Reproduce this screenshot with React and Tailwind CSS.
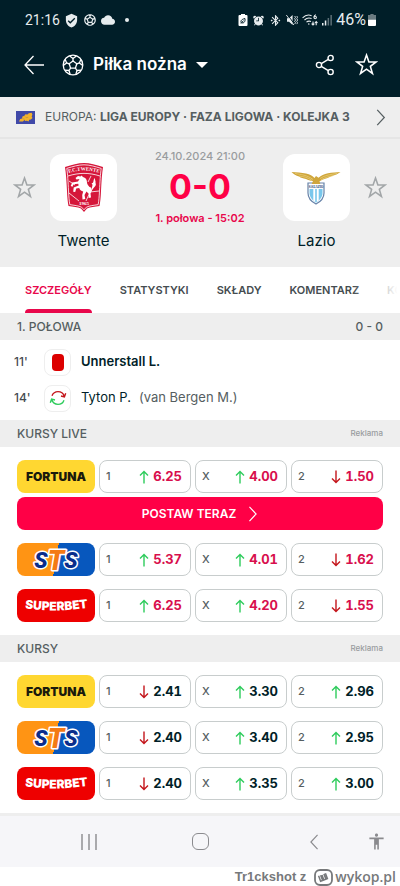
import React, { useState } from "react";
import { IoAlarm } from "react-icons/io5";
import {
  MdAccessibility,
  MdBluetoothConnected,
  MdCloud,
  MdSportsSoccer,
  MdVerifiedUser,
} from "react-icons/md";

const TABS = ["SZCZEGÓŁY", "STATYSTYKI", "SKŁADY", "KOMENTARZ", "KO"];

const LIVE_ODDS = [
  { bookmaker: "fortuna", odds: [["1", "up", "6.25"], ["X", "up", "4.00"], ["2", "down", "1.50"]] },
  { bookmaker: "sts", odds: [["1", "up", "5.37"], ["X", "up", "4.01"], ["2", "down", "1.62"]] },
  { bookmaker: "superbet", odds: [["1", "up", "6.25"], ["X", "up", "4.20"], ["2", "down", "1.55"]] },
];

const PREMATCH_ODDS = [
  { bookmaker: "fortuna", odds: [["1", "down", "2.41"], ["X", "up", "3.30"], ["2", "up", "2.96"]] },
  { bookmaker: "sts", odds: [["1", "down", "2.40"], ["X", "up", "3.40"], ["2", "up", "2.95"]] },
  { bookmaker: "superbet", odds: [["1", "down", "2.40"], ["X", "up", "3.35"], ["2", "up", "3.00"]] },
];

/* ---------- icons ---------- */

function StarIcon({ className }) {
  return (
    <svg className={className} viewBox="0 0 22 22" fill="none" stroke="currentColor" strokeLinejoin="miter">
      <path d="M11 2l2.300 6.600h6.900l-5.500 4.200 2 6.800L11 15.500l-5.700 4.100 2-6.800-5.500-4.200h6.900z" />
    </svg>
  );
}

function BallIcon() {
  return (
    <svg className="size-[22px]" viewBox="0 0 22 22" fill="none" stroke="#fff" strokeWidth="1.3" strokeLinejoin="round">
      <circle cx="11" cy="11" r="9.8" />
      <path d="M11 7l3.8 2.8-1.4 4.4H8.6L7.2 9.8z" />
      <path d="M11 7V4.400M14.800 9.800l2.600-.9M13.400 14.200l1.600 2.300M8.600 14.200L7 16.500M7.200 9.800l-2.600-.9" />
      <path d="M7.600 1.900L11 4.400l3.400-2.500M18.900 5.300l-1.500 3.600 3.300 2.600M19.200 16.200l-4.200.3-1.100 3.800M8.100 20.300L7 16.500l-4.200-.3M1.300 11.500l3.300-2.600-1.500-3.600" />
    </svg>
  );
}

function ShareIcon() {
  return (
    <svg className="h-[22px] w-5" viewBox="0 0 20 22" fill="none" stroke="#fff" strokeWidth="1.4">
      <circle cx="4" cy="11" r="2.6" />
      <circle cx="15.6" cy="4" r="2.6" />
      <circle cx="15.6" cy="18" r="2.6" />
      <path d="M6.300 9.600l7-4.200M6.300 12.400l7 4.200" />
    </svg>
  );
}

function Chevron({ className, left }) {
  return (
    <svg className={className} viewBox="0 0 10 18" fill="none" stroke="currentColor" strokeWidth="1.3">
      <path d={left ? "M9 1L1.500 9 9 17" : "M1 1l7.500 8L1 17"} />
    </svg>
  );
}

function TrendArrow({ dir }) {
  return dir === "up" ? (
    <svg className="h-3.5 w-2.5" viewBox="0 0 10 14" fill="none" stroke="#2ecc5c" strokeWidth="1.4">
      <path d="M5 13.500V1.500M1 5.500l4-4 4 4" />
    </svg>
  ) : (
    <svg className="h-3.5 w-2.5" viewBox="0 0 10 14" fill="none" stroke="#c4161c" strokeWidth="1.4">
      <path d="M5 .5v12M1 8.500l4 4 4-4" />
    </svg>
  );
}

function SubstitutionIcon() {
  return (
    <svg className="size-[18px]" viewBox="0 0 18 18" fill="none" strokeWidth="1.4">
      <path d="M3 6.800C4 4.200 6.400 2.600 9 2.600c3 0 5.300 1.700 6.200 4.600M12 7l3.400.9 1.300-3.600" stroke="#c4161c" />
      <path d="M15 11.200c-1 2.600-3.400 4.200-6 4.200-3 0-5.300-1.700-6.200-4.600M6 11l-3.400-.9-1.300 3.600" stroke="#2ecc5c" />
    </svg>
  );
}

function MuteIcon() {
  return (
    <svg className="h-3 w-3" viewBox="0 0 12 12" fill="currentColor">
      <path d="M1 4.200h2L6.600 1v10L3 7.800H1z" />
      <path d="M1.500.8l7 9.400" stroke="#001e28" strokeWidth="1" />
      <path d="M.3 1l7.600 10M8.600 2l1 1.300-1 1.400 1 1.300-1 1.400 1 1.300-1 1.400M10.700 2l1 1.300-1 1.400 1 1.300-1 1.400 1 1.300-1 1.400" fill="none" stroke="currentColor" strokeWidth=".9" />
    </svg>
  );
}

function WifiIcon() {
  return (
    <svg className="h-3 w-4" viewBox="0 0 16 12" fill="none" stroke="currentColor" strokeWidth="1.1">
      <path d="M.6 3.800C3.200 1.200 6.600.5 9.600 1.700M2.500 6C4.500 4 7 3.500 9.600 4.500M4.500 8.200C5.800 7 7.500 6.900 9 7.500" />
      <circle cx="6.8" cy="10" r=".8" fill="currentColor" stroke="none" />
      <path d="M14 .8c-1.600.2-2 1.400-2 2.500M11 11V7.500M9.600 9.600L11 11l1.400-1.400M14.200 11.300V7.600M12.900 9l1.300-1.400L15.500 9" />
      <circle cx="13.2" cy="3.500" r="1.2" />
    </svg>
  );
}

function SignalIcon() {
  return (
    <svg className="h-3 w-2.5" viewBox="0 0 10 12" fill="currentColor">
      <rect x="0" y="9" width="1.5" height="2.5" />
      <rect x="2.8" y="6.5" width="1.5" height="5" />
      <rect x="5.6" y="4" width="1.5" height="7.5" opacity=".4" />
      <rect x="8.4" y="1" width="1.5" height="10.5" opacity=".4" />
    </svg>
  );
}

function BatteryIcon() {
  return (
    <svg className="h-3 w-2" viewBox="0 0 8 12">
      <path d="M2.400 0h3.200v1H8v5H0V1h2.400z" fill="#6b7b81" />
      <path d="M0 5.800h8V11a1 1 0 0 1-1 1H1a1 1 0 0 1-1-1z" fill="#fff" />
    </svg>
  );
}

function SaverIcon() {
  return (
    <svg className="h-3 w-2.5" viewBox="0 0 10 12">
      <path d="M3 0h4v1h1.500a1 1 0 0 1 1 1v9a1 1 0 0 1-1 1h-7a1 1 0 0 1-1-1V2a1 1 0 0 1 1-1H3z" fill="#fff" />
      <path d="M3.400 9c-1-1.600-.4-3.800 3.600-4.400.4 3-1 4.800-3 4.200M3 9.600l2.400-3" fill="none" stroke="#001e28" />
    </svg>
  );
}

function EuropeFlag() {
  return (
    <svg className="h-[13px] w-[19px]" viewBox="0 0 19 13">
      <rect width="19" height="13" fill="#4049a8" />
      <path d="M3 10.500l1.200-2.600 1.900-.3.300-2 2-.8 1-1.600 2 .4 1.400-1.400 2.800-.4.800 1.600-.7 2 .8 1.700-1.600 1.400-1.700.2-.6 1.700-1.700-.7-1.600.3-.9-.9-1.500 1.500z" fill="#f2b22c" />
      <path d="M6.500 7.600l2.300.7M9 5.500l1.200 1.200 2-.4" stroke="#b08a4a" strokeWidth=".6" fill="none" />
    </svg>
  );
}

/* ---------- club crests ---------- */

function TwenteCrest() {
  return (
    <svg className="h-[51px] w-10" viewBox="0 0 40 51">
      <path d="M1 5C8 3 14 1 20 1s12 2 19 4c-1 6-1.500 14-2 24-.3 7-.8 11-1.500 15-5 1-9 1-12.500 2.500L20 50l-3-3.500C13.500 45 9.500 45 4.500 44 3.800 40 3.300 36 3 29 2.500 19 2 11 1 5z" fill="#d5163a" />
      <path d="M2.800 6.400C9 4.500 14.500 2.800 20 2.800s11 1.700 17.200 3.600c-.8 6-1.300 13-1.700 22.600-.3 6-.7 10-1.300 13.600-4.500.8-8.500 1-11.800 2.600L20 47.800l-2.400-2.600c-3.300-1.600-7.300-1.800-11.800-2.600C5.200 39 4.800 35 4.500 29 4.100 19.400 3.600 12.400 2.800 6.400z" fill="none" stroke="#fff" strokeWidth=".8" />
      <path d="M4 14c11-3.500 21-3.500 32 0M5 19l6 4M5 31l10 8M35 29l-9 1-4 9M27 14l-3 6" fill="none" stroke="#fff" strokeWidth=".8" />
      <path id="twente-arc" d="M2.500 11.800c11-4.400 24-4.400 35 0" fill="none" />
      <text fontFamily="Liberation Serif, serif" fontWeight="700" fontSize="5" fill="#fff" textAnchor="middle">
        <textPath href="#twente-arc" startOffset="50%">F.C.TWENTE</textPath>
      </text>
      <path d="M14 14l2.500.5 1-1 1.500 1.500c2.500.6 4 2.500 4 5.500 0 2 1.500 3 2.500 4.500 1.500.2 2.500 1.500 2.500 3.500l-1.500 3 .5 4-2.500.5.5-4-2.500-2.500-2 3.500.8 4-2.800.5-.3-4.500 1-3.500c-2-.4-3.500-1.700-4-3.500l-3 .5-1 3.500-2-.3.500-4.200 5-2-.5-1.800-4.700.6-1 2.500-1.800-.8 1.500-3.500 5.800-1 1.500-2.500-3 .5-1-1.500z" fill="#fff" />
      <path d="M28.500 28c-2-3 1.500-4-1-7 3 .5 1-3 3.500-5-.5 2 1 3 .5 5 1.500 3-2 4-3 7z" fill="#fff" />
      <text x="20" y="43" fontFamily="Liberation Serif, serif" fontWeight="700" fontSize="5" fill="#fff" textAnchor="middle">1965</text>
    </svg>
  );
}

function LazioCrest() {
  return (
    <svg className="h-[34px] w-[50px]" viewBox="0 0 50 34">
      <path d="M17 12h16v10c0 5-3 8.500-8 11-5-2.500-8-6-8-11z" fill="#fff" stroke="#6682a8" strokeWidth="1.200" />
      <path d="M18.500 18h13v4c0 4-2.500 7-6.500 9.500-4-2.500-6.500-5.500-6.500-9.500z" fill="#79c7ec" />
      <path d="M22.300 18h5.400v11.500L25 31.500l-2.700-2z" fill="#fff" />
      <path d="M24.200 18h1.600v13l-.8.500-.8-.5z" fill="#79c7ec" />
      <path d="M18 14h14v3.200H18z" fill="#e6edf5" />
      <text x="25" y="17" fontFamily="Liberation Serif, serif" fontWeight="700" fontSize="3" fill="#27416e" textAnchor="middle">S.S.LAZIO</text>
      <path d="M.5 1c5 .6 10 .4 14.500 1.600 4 1 6.500 2.200 8.500 4.400L25 5l2.500 1.800C30 4.400 33 3 37 2.200 41 1.400 45 1.600 49.500 1c-2.500 2-5.500 3.200-8.500 4-3 1.600-6 2.600-9 3.500l-3.500 1.800.8 2.700h-8.600l1.300-3c-3-.3-5-1-7-2-3-.4-5-1.200-7-2.500C5 4.600 2.500 3.200.5 1z" fill="#cfa63c" />
      <path d="M4 2.500c6 1 12 1.500 18 6M46 2.500c-6 1-12 1.500-17 5M8 5c5 .6 9 1.500 13 4.500M42 4.800c-4 .4-8 1.800-12 4" fill="none" stroke="#f0d888" strokeWidth=".6" />
    </svg>
  );
}

/* ---------- bookmakers ---------- */

function BookmakerLogo({ name }) {
  if (name === "fortuna") {
    return (
      <a href="#fortuna" className="flex h-[33px] items-center justify-center rounded-lg bg-[#ffd731] text-xs font-black text-[#1a1a0c]">
        FORTUNA
      </a>
    );
  }
  if (name === "sts") {
    return (
      <a href="#sts" aria-label="STS" className="flex h-[33px] items-center justify-center rounded-lg bg-linear-100 from-[#ff9414] from-50% to-[#0757bd] to-50%">
        <svg className="h-[33px] w-14" viewBox="0 0 56 33" overflow="visible">
          <text x="28" y="25" fontFamily="Roboto, sans-serif" fontWeight="900" fontStyle="italic" fontSize="22" fill="#0a2d8c" stroke="#fff" strokeWidth="3" strokeLinejoin="round" paintOrder="stroke" textAnchor="middle">
            S<tspan fontSize="27" dy="2" fill="#f47a14">T</tspan><tspan dy="-2">S</tspan>
          </text>
        </svg>
      </a>
    );
  }
  return (
    <a href="#superbet" aria-label="Superbet" className="block h-[33px] rounded-lg bg-[#ee0000]">
      <svg className="h-full w-full" viewBox="0 0 78 33">
        <path id="superbet-wave" d="M5 19.500C16 20 24 21.500 38 21.500S62 19.500 74 18.500" fill="none" />
        <text fontFamily="Inter, sans-serif" fontWeight="900" fontSize="12" fill="#fff" textAnchor="middle">
          <textPath href="#superbet-wave" startOffset="50%">SUPERBET</textPath>
        </text>
      </svg>
    </a>
  );
}

function OddsRow({ row, live }) {
  return (
    <div className="grid grid-cols-[78px_1fr_1fr_1fr] gap-1">
      <BookmakerLogo name={row.bookmaker} />
      {row.odds.map(([label, dir, value]) => (
        <button key={label} className="flex h-[33px] items-center justify-between rounded-lg border border-[#c8cdcd] pr-2 pl-1.5 text-[#555e61]">
          <span className="text-[11px] font-medium">{label}</span>
          <span className="flex items-center gap-1">
            <TrendArrow dir={dir} />
            <span className={live ? "text-[13px] font-bold text-[#d80f4d] tabular-nums" : "text-[13px] font-bold text-[#001e28] tabular-nums"}>
              {value}
            </span>
          </span>
        </button>
      ))}
    </div>
  );
}

function SectionBar({ title, children }) {
  return (
    <div className="flex h-[27px] items-center justify-between bg-[#eeeeee] px-[17px] text-xs font-medium text-[#555e61]">
      <h2>{title}</h2>
      {children}
    </div>
  );
}

function Team({ name, children }) {
  return (
    <div className="flex flex-col items-center gap-2.5">
      <div className="flex size-[67px] items-center justify-center rounded-xl bg-white">{children}</div>
      <span className="text-[15px] leading-5 text-[#001e28]">{name}</span>
    </div>
  );
}

function App() {
  const [tab, setTab] = useState("SZCZEGÓŁY");

  return (
    <div className="w-full bg-white font-[Inter,sans-serif]">
      <header className="bg-[#001e28] text-white">
        {/* Status bar */}
        <div className="flex h-10 items-center justify-between pr-6 pl-[25px] font-[Roboto,sans-serif] text-[15px] text-[#e6ecee]">
          <div className="flex items-center gap-1">
            <span className="text-sm">21:16</span>
            <MdVerifiedUser size={15} />
            <MdSportsSoccer size={14} />
            <MdCloud size={14} />
            <span className="ml-1.5 size-1 rounded-full bg-[#e6ecee]" />
          </div>
          <div className="flex items-center gap-1">
            <SaverIcon />
            <IoAlarm size={13} />
            <MdBluetoothConnected size={13} />
            <MuteIcon />
            <WifiIcon />
            <SignalIcon />
            <span className="flex items-center gap-0.5 text-base">
              46%
              <BatteryIcon />
            </span>
          </div>
        </div>

        {/* Nav bar */}
        <div className="flex h-[57px] items-center pr-[22px] pb-2 pl-6">
          <button aria-label="Wstecz">
            <svg className="h-5 w-5" viewBox="0 0 20 20" fill="none" stroke="#fff" strokeWidth="1.300">
              <path d="M20 10H1M9.500 1L1 10l8.500 9" />
            </svg>
          </button>
          <button className="ml-[18px] flex items-center gap-[9px] text-[17px] font-semibold">
            <BallIcon />
            Piłka nożna
            <svg className="h-1.5 w-3" viewBox="0 0 12 6" fill="#fff">
              <path d="M0 0h12L6 6z" />
            </svg>
          </button>
          <div className="ml-auto flex items-center gap-5">
            <button aria-label="Udostępnij">
              <ShareIcon />
            </button>
            <button aria-label="Ulubione">
              <StarIcon className="size-[23px] stroke-[1.5]" />
            </button>
          </div>
        </div>
      </header>

      {/* League */}
      <a href="#liga" className="flex h-[42px] items-center border-b-2 border-[#e5e5e5] bg-[#eeeeee] pr-3.5 pl-4 text-xs text-[#555e61]">
        <EuropeFlag />
        <span className="ml-2.5 whitespace-nowrap">
          EUROPA: <b className="font-bold">LIGA EUROPY · FAZA LIGOWA · KOLEJKA 3</b>
        </span>
        <Chevron className="ml-auto h-[17px] w-2.5" />
      </a>

      {/* Match */}
      <div className="flex justify-between bg-[#eeeeee] px-[13px] pt-[15px] pb-4">
        <div className="flex gap-3.5">
          <button aria-label="Obserwuj Twente" className="flex h-[67px] items-center text-[#a2a6a8]">
            <StarIcon className="size-[23px] stroke-[1.5]" />
          </button>
          <Team name="Twente">
            <TwenteCrest />
          </Team>
        </div>
        <div className="-mt-1.5 flex flex-col items-center gap-[3px] whitespace-nowrap">
          <span className="text-[11px] leading-4 font-medium text-[#999c9e]">24.10.2024 21:00</span>
          <span className="text-[34px] leading-10 font-bold text-[#ff0046]">0-0</span>
          <span className="text-[11px] leading-4 font-semibold text-[#e8074b]">1. połowa - 15:02</span>
        </div>
        <div className="flex gap-3.5">
          <Team name="Lazio">
            <LazioCrest />
          </Team>
          <button aria-label="Obserwuj Lazio" className="flex h-[67px] items-center text-[#a2a6a8]">
            <StarIcon className="size-[23px] stroke-[1.5]" />
          </button>
        </div>
      </div>

      {/* Tabs */}
      <div className="relative">
        <div role="tablist" className="flex h-[46px] gap-7 overflow-hidden pl-[25px]">
          {TABS.map((t) => (
            <button
              key={t}
              role="tab"
              aria-selected={t === tab}
              onClick={() => setTab(t)}
              className={
                t === tab
                  ? "flex shrink-0 flex-col justify-between pt-[15px] text-[11px] leading-4 font-semibold text-[#e8074b]"
                  : "flex shrink-0 flex-col justify-between pt-[15px] text-[11px] leading-4 font-semibold text-[#454c50]"
              }
            >
              {t}
              {t === tab && <span className="h-1 w-full rounded-t bg-[#e8074b]" />}
            </button>
          ))}
        </div>
        <div className="pointer-events-none absolute inset-y-0 right-0 w-12 bg-linear-to-r from-white/0 to-white to-95%" />
      </div>

      <SectionBar title="1. POŁOWA">
        <span>0 - 0</span>
      </SectionBar>

      {/* Events */}
      <ul className="py-1 text-[13px] text-[#001e28]">
        <li className="flex h-9 items-center pl-3.5">
          <span className="w-[30px] text-xs font-medium text-[#454c50]">11'</span>
          <span className="flex size-[27px] items-center justify-center rounded-lg border border-[#eeeeee]">
            <span className="h-[17px] w-3 rounded-sm bg-[#dc0000]" />
          </span>
          <span className="ml-2.5 font-semibold">Unnerstall L.</span>
        </li>
        <li className="flex h-9 items-center pl-3.5">
          <span className="w-[30px] text-xs font-medium text-[#454c50]">14'</span>
          <span className="flex size-[27px] items-center justify-center rounded-lg border border-[#eeeeee]">
            <SubstitutionIcon />
          </span>
          <span className="ml-2.5">Tyton P.</span>
          <span className="ml-2 text-[#555e61]">(van Bergen M.)</span>
        </li>
      </ul>

      <SectionBar title="KURSY LIVE">
        <span className="text-[8px] text-[#999c9e]">Reklama</span>
      </SectionBar>
      <div className="flex flex-col gap-[13px] px-[17px] py-[13px]">
        <div className="flex flex-col gap-1">
          <OddsRow row={LIVE_ODDS[0]} live />
          <button className="flex h-[33px] items-center justify-center gap-3 rounded-lg bg-[#ff0046] text-xs font-semibold text-white">
            POSTAW TERAZ
            <Chevron className="h-4 w-2.5" />
          </button>
        </div>
        {LIVE_ODDS.slice(1).map((row) => (
          <OddsRow key={row.bookmaker} row={row} live />
        ))}
      </div>

      <SectionBar title="KURSY">
        <span className="text-[8px] text-[#999c9e]">Reklama</span>
      </SectionBar>
      <div className="flex flex-col gap-[13px] px-[17px] py-[13px]">
        {PREMATCH_ODDS.map((row) => (
          <OddsRow key={row.bookmaker} row={row} />
        ))}
      </div>

      {/* System navigation */}
      <nav className="grid h-[54px] grid-cols-[1fr_45px_1fr] items-center border-t-[3px] border-[#eeeeee] bg-[#f6f6f9] text-[#8a8a8e]">
        <button aria-label="Ostatnie" className="justify-self-center">
          <svg className="h-4 w-4" viewBox="0 0 16 16" stroke="currentColor" strokeWidth="1.400">
            <path d="M1 0v16M8 0v16M15 0v16" />
          </svg>
        </button>
        <button aria-label="Ekran główny" className="size-[17px] justify-self-center rounded-md border border-[#8a8a8e]" />
        <div className="flex items-center justify-between pr-3.5 pl-[86px]">
          <button aria-label="Cofnij">
            <Chevron left className="h-4 w-2.5" />
          </button>
          <button aria-label="Ułatwienia dostępu">
            <MdAccessibility size={19} />
          </button>
        </div>
      </nav>

      <footer className="flex h-5 items-center justify-end gap-2 pr-1 text-[#77797b]">
        <span className="font-['Liberation_Sans',sans-serif] text-[13px] font-bold">Tr1ckshot z</span>
        <span className="flex items-center font-['Open_Sans',sans-serif] text-sm leading-5 font-semibold">
          <svg className="h-[17px] w-[19px]" viewBox="0 0 19 17" fill="none" stroke="currentColor">
            <rect x="1" y="1" width="17" height="15" rx="5" strokeWidth="1.800" />
            <path d="M4.600 6.800l2 5.400 3.200-1.200-1.800-5M9.800 11l3.600-1.500-2-5.300M6.600 6.200l2 5M9.900 4.900l2 5" strokeWidth="1.500" />
          </svg>
          <span className="ml-0.5">wykop.pl</span>
        </span>
      </footer>
    </div>
  );
}

export default App;
